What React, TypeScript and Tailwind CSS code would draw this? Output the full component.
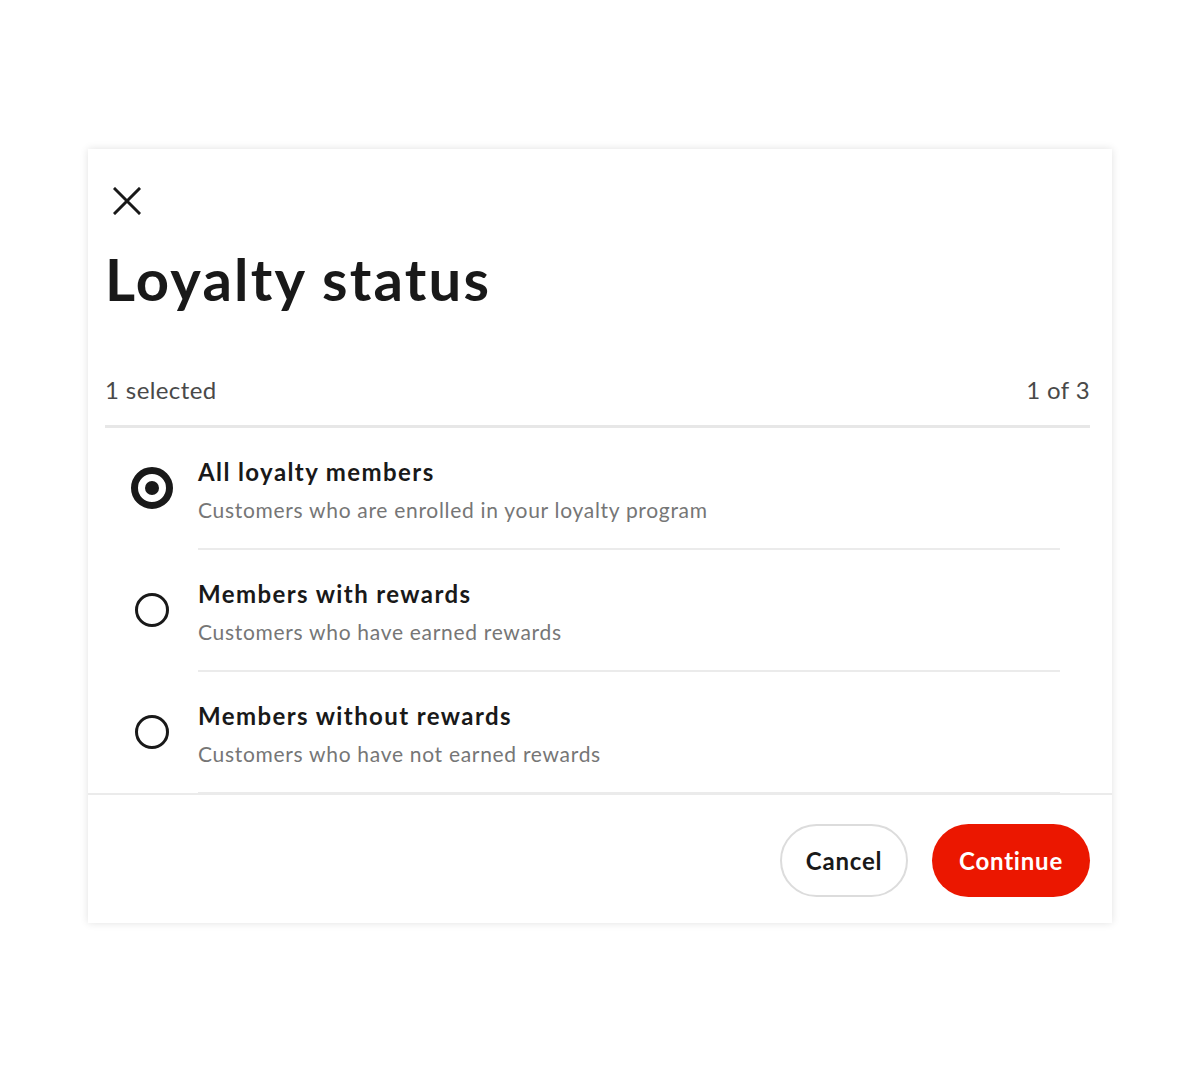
import React, { useState } from 'react';

interface Option {
  id: string;
  title: string;
  description: string;
}

const options: Option[] = [
  { id: 'all', title: 'All loyalty members', description: 'Customers who are enrolled in your loyalty program' },
  { id: 'with', title: 'Members with rewards', description: 'Customers who have earned rewards' },
  { id: 'without', title: 'Members without rewards', description: 'Customers who have not earned rewards' },
];

const Radio: React.FC<{ checked: boolean }> = ({ checked }) =>
  checked ? (
    <span className="flex items-center justify-center w-[42px] h-[42px] rounded-full border-[7px] border-[#191919]">
      <span className="w-[14px] h-[14px] rounded-full bg-[#191919]" />
    </span>
  ) : (
    <span className="w-[34px] h-[34px] rounded-full border-[3px] border-[#191919]" />
  );

export default function App() {
  const [selected, setSelected] = useState('all');

  return (
    <div className="min-h-screen bg-white pt-[149px] px-[88px] font-['Lato',sans-serif] text-[#191919]">
      <div className="bg-white shadow-[0_0_8px_rgba(0,0,0,0.12)] flex flex-col">
        <div className="pl-[17px] pr-[22px]">
          <button className="mt-[37px] ml-[7px] w-[30px] h-[30px] flex items-center justify-center">
            <svg width="28" height="28" viewBox="0 0 28 28" fill="none" stroke="#191919" strokeWidth="3" strokeLinecap="square">
              <path d="M2 2L26 26M26 2L2 26" />
            </svg>
          </button>
          <h1 className="mt-[28px] text-[58px] font-bold leading-[70px] tracking-[2.2px]">Loyalty status</h1>

          <div className="mt-[61px] flex justify-between items-center text-[24px] text-[#494949] leading-[30px] tracking-[0.4px] pb-[20px] border-b-[3px] border-[#e7e7e7]">
            <span>1 selected</span>
            <span>1 of 3</span>
          </div>

          <div className="h-[365px] overflow-hidden">
            {options.map((o) => (
              <button
                key={o.id}
                onClick={() => setSelected(o.id)}
                className="flex w-full text-left"
              >
                <div className="w-[93px] pt-[39px]">
                  <div className="h-[42px] flex items-center justify-center">
                    <Radio checked={selected === o.id} />
                  </div>
                </div>
                <div className="flex-1 mr-[30px] border-b-2 border-[#ebebeb] pt-[27px] pb-[21px]">
                  <div className="text-[24px] font-bold leading-[34px] tracking-[1.4px]">{o.title}</div>
                  <div className="mt-[4px] text-[21px] text-[#767676] leading-[34px] tracking-[0.7px]">{o.description}</div>
                </div>
              </button>
            ))}
          </div>
        </div>

        <div className="border-t-2 border-[#ebebeb] flex justify-end gap-[24px] pr-[22px] pt-[29px] pb-[26px]">
          <button className="h-[73px] w-[128px] rounded-full border-2 border-[#dcdcdc] text-[24px] font-bold tracking-[0.8px] text-[#191919]">
            Cancel
          </button>
          <button className="h-[73px] w-[158px] rounded-full bg-[#eb1700] text-[24px] font-bold tracking-[0.8px] text-white">
            Continue
          </button>
        </div>
      </div>
    </div>
  );
}
